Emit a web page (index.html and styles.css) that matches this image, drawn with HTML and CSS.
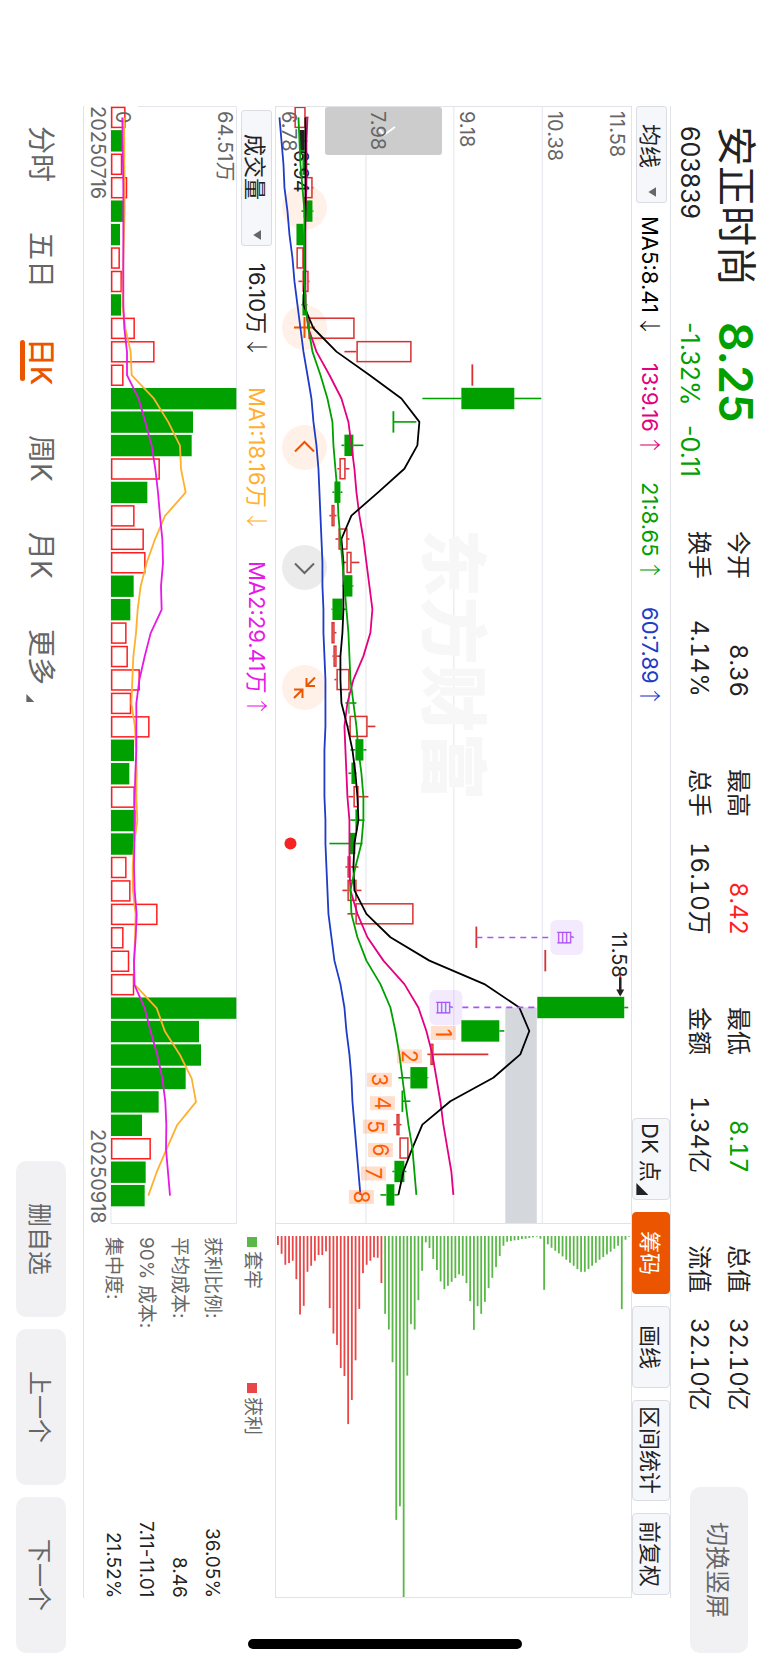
FILE: index.html
```html
<!DOCTYPE html>
<html lang="zh-CN">
<head>
  <meta charset="UTF-8">
  <meta name="viewport" content="width=device-width, initial-scale=1">
  <title>安正时尚 603839</title>
  <link rel="stylesheet" href="styles.css">
</head>
<body>

<div class="screen">

  <!-- Quote header -->
  <header class="quote">
    <div class="summary">
      <h1>安正时尚</h1>
      <strong class="price">8.25</strong>
      <span class="code">603839</span>
      <span class="change"><span>-1.32%</span><span>-0.11</span></span>
    </div>
    <dl class="stats">
      <div><dt>今开</dt><dd>8.36</dd></div>
      <div><dt>换手</dt><dd>4.14%</dd></div>
      <div><dt>最高</dt><dd class="up">8.42</dd></div>
      <div><dt>总手</dt><dd>16.10万</dd></div>
      <div><dt>最低</dt><dd class="down">8.17</dd></div>
      <div><dt>金额</dt><dd>1.34亿</dd></div>
      <div><dt>总值</dt><dd>32.10亿</dd></div>
      <div><dt>流值</dt><dd>32.10亿</dd></div>
    </dl>
    <button class="soft-btn switch-btn" type="button">切换竖屏</button>
  </header>

  <!-- Moving averages + tools -->
  <div class="toolbar">
    <button class="picker" type="button">均线<i class="caret"></i></button>
    <div class="legend">
      <span class="ma5">MA5:8.41<i class="arrow">↓</i></span>
      <span class="ma13">13:9.16<i class="arrow">↑</i></span>
      <span class="ma21">21:8.65<i class="arrow">↑</i></span>
      <span class="ma60">60:7.89<i class="arrow">↑</i></span>
    </div>
    <div class="tools">
      <button class="tool" type="button">DK 点<i class="corner"></i></button>
      <button class="tool active" type="button">筹码</button>
      <button class="tool" type="button">画线</button>
      <button class="tool tool-wide" type="button">区间统计</button>
      <button class="tool" type="button">前复权</button>
    </div>
  </div>

  <!-- Price chart + chip distribution -->
  <div class="charts">
    <div class="plot price-plot">
      <svg class="backdrop" viewBox="276 107 355 1117" aria-hidden="true">
        <path class="grid" d="M365.5 106V1224M453.5 106V1224M542 106V1224"/>
        <text class="watermark" transform="translate(428 529) rotate(90)">东方财富</text>
      </svg>
      <div class="zoom-tools">
        <button class="round" type="button" aria-label="缩小">
          <svg viewBox="0 0 45 45"><path d="M22.5 12V33"/></svg>
        </button>
        <button class="round" type="button" aria-label="放大">
          <svg viewBox="0 0 45 45"><path d="M22.5 12V33M12 22.5H33"/></svg>
        </button>
        <button class="round" type="button" aria-label="左移">
          <svg viewBox="0 0 45 45"><path d="M13 26.5L22.5 17L32 26.5"/></svg>
        </button>
        <button class="round off" type="button" aria-label="右移">
          <svg viewBox="0 0 45 45"><path d="M13 18.5L22.5 28L32 18.5"/></svg>
        </button>
        <button class="round" type="button" aria-label="收起">
          <svg viewBox="0 0 45 45"><path d="M33 12.5L24.5 21M24.5 13V21H33M12 33L20.5 24.5M12 24.5H20.5V33"/></svg>
        </button>
      </div>
      <button class="pull" type="button" aria-label="展开">
        <svg viewBox="0 0 117 48"><path d="M54 22L59 28L70 20"/></svg>
      </button>
      <svg id="priceChart" class="layer" viewBox="276 107 355 1117"></svg>
    </div>
    <div class="plot chip-plot">
      <svg id="chipChart" viewBox="276 1225 355 372"></svg>
    </div>
  </div>

  <!-- Volume + chip figures -->
  <div class="lower">
    <div class="volume">
      <div class="toolbar volume-bar">
        <button class="picker picker-wide" type="button">成交量<i class="caret"></i></button>
        <div class="legend">
          <span>16.10万<i class="arrow">↓</i></span>
          <span class="vma1">MA1:18.16万<i class="arrow">↓</i></span>
          <span class="vma2">MA2:29.41万<i class="arrow">↑</i></span>
        </div>
      </div>
      <div class="volume-plot">
        <svg id="volumeChart" viewBox="110 106 128 1118"></svg>
      </div>
      <div class="dates"><span>20250716</span><span>20250918</span></div>
    </div>
    <div class="chips">
      <div class="keys">
        <span class="key key-down">套牢</span>
        <span class="key key-up">获利</span>
      </div>
      <dl class="figures">
        <div><dt>获利比例:</dt><dd>36.05%</dd></div>
        <div><dt>平均成本:</dt><dd>8.46</dd></div>
        <div><dt>90% 成本:</dt><dd>7.11-11.01</dd></div>
        <div><dt>集中度:</dt><dd>21.52%</dd></div>
      </dl>
    </div>
  </div>

  <!-- Period tabs -->
  <footer class="bottom">
    <nav class="tabs">
      <a href="#">分时</a>
      <a href="#">五日</a>
      <a href="#" class="current">日K</a>
      <a href="#">周K</a>
      <a href="#">月K</a>
      <a href="#">更多<i class="more"></i></a>
    </nav>
    <div class="actions">
      <button class="soft-btn" type="button">删自选</button>
      <button class="soft-btn" type="button">上一个</button>
      <button class="soft-btn" type="button">下一个</button>
    </div>
  </footer>

  <div class="home-bar"></div>
</div>

<script src="chart.js"></script>
</body>
</html>
```
FILE: styles.css
```css
* {
  margin: 0;
  padding: 0;
  box-sizing: border-box;
}

html {
  height: 100%;
}

/* The phone is held sideways: lines run top to bottom, rows stack right to left */
body {
  height: 100%;
  writing-mode: vertical-rl;
  text-orientation: sideways;
  font-family: Inter, "Noto Sans CJK SC", sans-serif;
  background: #fff;
  color: #222;
}

button {
  writing-mode: vertical-rl;
  text-orientation: sideways;
  font-family: inherit;
  color: inherit;
  border: none;
  background: none;
  cursor: pointer;
}

svg {
  display: block;
  width: 100%;
  height: 100%;
}

i {
  font-style: normal;
}

.screen {
  position: relative;
  display: flex;
  flex-direction: column;
  width: 100vw;
  height: 100vh;
  overflow: hidden;
}

/* Quote header */
.quote {
  display: flex;
  align-items: center;
  width: 98px;
  padding: 126px 2px 12px 0;
}

.summary {
  display: grid;
  grid-template-columns: 196px 209px;
  grid-template-rows: 58px 34px;
  align-items: center;
}

h1 {
  font-size: 40px;
  font-weight: 400;
  line-height: 56px;
  white-space: nowrap;
}

.price {
  font-size: 46px;
  font-weight: 600;
  line-height: 56px;
}

.code,
.change {
  font-size: 25px;
  line-height: 32px;
}

.change {
  display: flex;
  gap: 20px;
}

.price,
.change,
.down {
  color: #00a000;
}

.up {
  color: #ff1e1e;
}

.stats {
  display: grid;
  grid-auto-flow: column;
  grid-template-rows: 39px 39px;
  grid-auto-columns: 166px;
  column-gap: 72px;
  font-size: 24px;
  line-height: 39px;
}

.stats div,
.figures div {
  display: flex;
  justify-content: space-between;
  white-space: nowrap;
}

.stats dd {
  font-variant-numeric: tabular-nums;
}

.soft-btn {
  width: 50px;
  height: 156px;
  border-radius: 10px;
  background: #f1f1f4;
  color: #666;
  font-size: 24px;
}

.switch-btn {
  width: 58px;
  height: 166px;
  margin-top: auto;
}

/* Tool rows */
.toolbar {
  display: flex;
  align-items: center;
  width: 39px;
  margin: 106px 0 67px;
  border-right: 1px solid #e2e3e8;
  font-size: 22px;
}

.picker {
  display: flex;
  align-items: center;
  justify-content: space-between;
  width: 31px;
  height: 97px;
  padding: 17px 0 5px 2px;
  border: 1px solid #dcdde3;
  border-radius: 3px;
  background: #f6f7fa;
  font-size: 22px;
}

.picker-wide {
  height: 136px;
  padding-top: 23px;
}

.caret {
  width: 8px;
  height: 10px;
  background: #666;
  clip-path: polygon(0 50%, 100% 0, 100% 100%);
}

.legend {
  display: flex;
  gap: 26px;
  margin-top: 13px;
  line-height: 36px;
  white-space: nowrap;
}

.arrow {
  margin-top: 2px;
  font-family: "Noto Sans CJK SC", sans-serif;
  font-weight: 300;
}

.ma5 { color: #000; }
.ma13 { color: #e4007f; }
.ma21 { color: #00a000; }
.ma60 { color: #1e3cc8; }
.vma1 { color: #ffb02e; }
.vma2 { color: #e619e6; }

.tools {
  display: flex;
  gap: 12px;
  height: max-content;
  margin: auto 0 3px;
}

.tool {
  position: relative;
  width: 38px;
  height: 82px;
  padding-left: 2px;
  border: 1px solid #dcdde3;
  border-radius: 4px;
  background: #f6f7fa;
  font-size: 22px;
  white-space: nowrap;
}

.tool:first-child {
  padding-bottom: 14px;
}

.tool-wide {
  height: 101px;
}

.tool.active {
  border-color: #eb5500;
  background: #eb5500;
  color: #fff;
}

.corner {
  position: absolute;
  left: 3px;
  bottom: 4px;
  width: 12px;
  height: 12px;
  background: #222;
  clip-path: polygon(0 0, 100% 100%, 0 100%);
}

/* Charts */
.charts {
  flex: 1;
  display: flex;
  margin: 106px 0 67px;
  border: 1px solid #e2e3e8;
}

.plot {
  position: relative;
  flex: 1117;
  min-height: 0;
}

.chip-plot {
  flex: 373;
  border-top: 1px solid #e2e3e8;
}

.backdrop,
.layer {
  position: absolute;
  top: 0;
  left: 0;
}

.layer {
  pointer-events: none;
}

.grid {
  fill: none;
  stroke: #e2e5ec;
}

svg text {
  writing-mode: horizontal-tb;
}

.watermark {
  font-size: 68px;
  font-weight: 900;
  fill: #f7f7f8;
}

.zoom-tools {
  position: absolute;
  top: 78px;
  left: 6px;
  display: flex;
  gap: 75px;
}

.round {
  width: 45px;
  height: 45px;
  border-radius: 50%;
  background: #fff0e8;
}

.round path,
.pull path {
  fill: none;
  stroke: #eb5500;
  stroke-width: 2;
}

.round.off {
  background: #ebebeb;
}

.round.off path {
  stroke: #666;
}

.pull {
  position: absolute;
  top: 0;
  left: 49px;
  width: 117px;
  height: 48px;
  border-radius: 3px;
  background: #ccc;
}

.pull path {
  stroke: #fff;
}

.axis {
  font-size: 20px;
  fill: #666;
}

.mark {
  font-size: 20px;
  fill: #222;
}

.count {
  font-size: 21px;
  fill: #ff5a00;
  text-anchor: middle;
}

.self {
  font-size: 17px;
  fill: #a855f7;
  text-anchor: middle;
}

.line {
  fill: none;
  stroke-width: 1.8;
  stroke-linejoin: round;
}

/* Volume and chip figures */
.lower {
  display: flex;
  width: 192px;
  margin: 106px 0 67px;
  border-left: 1px solid #e2e3e8;
}

.volume {
  flex: 1118;
  min-height: 0;
}

.volume-bar {
  width: 37px;
  margin: 0;
  padding-top: 4px;
  border: none;
}

.volume-bar .legend {
  gap: 29px;
  margin-top: 17px;
  padding-left: 3px;
}

.volume-plot {
  width: 128px;
}

.dates {
  display: flex;
  justify-content: space-between;
  width: 26px;
  color: #666;
  font-size: 20px;
  line-height: 24px;
}

.chips {
  flex: 374;
  min-height: 0;
  color: #666;
}

.keys {
  display: flex;
  gap: 94px;
  width: 46px;
  padding-top: 13px;
  font-size: 19px;
  line-height: 38px;
}

.key {
  display: flex;
  align-items: center;
  gap: 4px;
}

.key::before {
  content: "";
  width: 10px;
  height: 10px;
  background: #5ab946;
}

.key-up::before {
  background: #eb4646;
}

.figures {
  padding-top: 13px;
  font-size: 19px;
  line-height: 33px;
}

.figures dd {
  color: #222;
}

/* Period tabs */
.bottom {
  display: flex;
  align-items: center;
  width: 83px;
  padding: 126px 0 12px;
}

.tabs {
  display: flex;
  gap: 50px;
  color: #666;
  font-size: 28px;
}

.tabs a {
  position: relative;
  color: inherit;
  line-height: 42px;
  text-decoration: none;
  white-space: nowrap;
}

.tabs .current {
  color: #eb5500;
  font-weight: 500;
}

.tabs .current::after {
  content: "";
  position: absolute;
  left: 0;
  top: 2px;
  bottom: 4px;
  width: 5px;
  border-radius: 3px;
  background: #eb5500;
}

.more {
  position: absolute;
  left: 6px;
  bottom: -17px;
  width: 8px;
  height: 8px;
  background: #666;
  clip-path: polygon(0 0, 100% 100%, 0 100%);
}

.actions {
  display: flex;
  gap: 12px;
  margin-top: auto;
}

.home-bar {
  position: absolute;
  bottom: 16px;
  left: 50%;
  width: 274px;
  height: 10px;
  margin-left: -137px;
  border-radius: 5px;
  background: #000;
}
```
FILE: chart.js
```js
const RED = '#d93030';
const GREEN = '#00a000';
const FIRST = 117.4;  // centre of the first day
const STEP = 23.44;   // distance between days

const dayY = i => FIRST + i * STEP;

// low, body start, body end, high, colour
const candles = [
  [291, 294, 305, 308, 'r'], [300, 300, 304, 307, 'g'], [302, 302, 305, 309, 'g'],
  [304, 305, 312, 313, 'r'], [301, 305, 312, 313, 'g'], [296, 296, 303, 303, 'g'],
  [296, 296, 303, 303, 'r'], [298, 302, 308, 309, 'r'], [301, 302, 306, 307, 'g'],
  [308, 308, 354, 354, 'r'], [344, 356, 411, 411, 'r'], [472, 472, 472, 472, 'r'],
  [422, 461, 514, 541, 'g'], [393, 393, 393, 416, 'g'], [341, 344, 353, 363, 'g'],
  [337, 339, 345, 349, 'r'], [332, 334, 340, 342, 'g'], [329, 331, 334, 336, 'r'],
  [335, 338, 347, 349, 'r'], [342, 346, 351, 359, 'r'], [342, 344, 352, 353, 'g'],
  [331, 332, 342, 346, 'g'], [331, 331, 334, 336, 'r'], [332, 333, 336, 340, 'r'],
  [334, 336, 349, 349, 'r'], [345, 348, 349, 356, 'g'], [348, 349, 367, 375, 'r'],
  [350, 355, 363, 366, 'g'], [348, 351, 355, 356, 'g'], [348, 353, 358, 368, 'r'],
  [350, 355, 357, 364, 'g'], [329, 349, 355, 362, 'g'], [345, 347, 350, 358, 'r'],
  [342, 347, 356, 361, 'r'], [347, 355, 413, 413, 'r'], [476, 476, 476, 476, 'r'],
  [545, 545, 545, 545, 'r'], [620, 620, 620, 620, 'r'], [537, 537, 624, 628, 'g'],
  [461, 461, 499, 504, 'g'], [427, 430, 433, 488, 'r'], [398, 410, 427, 428, 'g'],
  [402, 402, 402, 410, 'g'], [393, 396, 399, 401, 'r'], [399, 399, 408, 408, 'r'],
  [392, 394, 404, 406, 'g'], [380, 386, 394, 398, 'g']
];

const ma5 = [305, 305, 305, 305, 305, 304, 304, 304, 303, 313, 336, 369, 401, 419, 417, 404,
  378, 351, 341, 343, 343, 343, 342, 340, 340, 341, 347, 352, 355, 357, 358, 354, 353, 354,
  366, 390, 429, 484, 519, 529, 520, 493, 450, 422, 412, 403, 398];
const ma13 = [307, 306, 306, 306, 305, 305, 305, 305, 305, 308, 316, 329, 341, 348, 351, 354,
  356, 359, 363, 366, 369, 372, 370, 363, 353, 347, 344, 345, 346, 347, 349, 349, 349, 350,
  357, 367, 383, 404, 418, 426, 432, 436, 440, 443, 447, 451, 453];
const ma21 = [298, 299, 300, 302, 304, 304, 304, 304, 305, 308, 312, 320, 327, 332, 333, 335,
  337, 338, 340, 342, 344, 346, 348, 349, 350, 353, 356, 358, 361, 363, 363, 361, 355, 350,
  351, 357, 366, 380, 390, 395, 399, 402, 405, 408, 412, 414, 416];
const ma60 = [279, 281, 283, 284, 287, 289, 292, 294, 297, 300, 303, 307, 311, 313, 316, 318,
  319, 320, 321, 322, 322, 323, 323, 324, 325, 325, 325, 324, 324, 324, 325, 325, 326, 327,
  328, 331, 334, 340, 344, 346, 349, 351, 352, 354, 356, 358, 360];

// volume bars and their averages, 376 = 64.51万
const volumes = [43, 33, 33, 48, 36, 27, 26, 32, 30, 71, 130, 37, 376, 246, 242, 146, 109, 70,
  98, 103, 68, 58, 46, 50, 86, 60, 115, 69, 55, 71, 74, 68, 46, 58, 139, 37, 54, 69, 376, 264,
  270, 224, 143, 93, 119, 104, 101];
const falling = [1, 4, 5, 8, 12, 13, 14, 16, 20, 21, 27, 28, 30, 31, 38, 39, 40, 41, 42, 43, 45, 46];
const vma1 = [39, 40, 40, 41, 41, 39, 37, 35, 34, 43, 59, 62, 129, 172, 207, 210, 224, 162, 132,
  107, 89, 80, 75, 67, 64, 61, 72, 75, 77, 76, 79, 69, 65, 66, 74, 72, 69, 71, 137, 162, 207,
  242, 255, 198, 167, 137, 112];
const vma2 = [34, 35, 36, 37, 37, 37, 37, 37, 37, 40, 48, 48, 83, 103, 122, 133, 141, 147, 154,
  156, 150, 152, 119, 101, 85, 76, 76, 76, 73, 71, 70, 70, 69, 71, 77, 74, 69, 70, 101, 119,
  139, 154, 163, 166, 165, 171, 177];

// chip distribution, cheapest price first
const chips = [27, 53, 86, 81, 74, 129, 235, 209, 107, 89, 74, 57, 57, 46, 216, 292, 326, 395,
  419, 563, 491, 372, 218, 111, 86, 74, 64, 65, 141,
  233, 280, 378, 850, 809, 1082, 418, 264, 280, 192, 104, 19, 36, 69, 102, 136, 159, 149, 137,
  126, 115, 119, 141, 195, 281, 210, 233, 197, 156, 125, 93, 60, 29, 17, 15, 13, 12, 9, 8, 6,
  4, 2, 8, 161, 25, 35, 44, 52, 61, 71, 80, 89, 99, 107, 107, 99, 89, 80, 71, 63, 55, 47, 38,
  29, 219, 11, 2];
const PROFIT = 29;

const text = (cls, x, y, str) =>
  `<text class="${cls}" transform="translate(${x} ${y}) rotate(90)">${str}</text>`;

const line = (color, xs) => {
  const pts = xs.map((x, i) => `${x},${dayY(i).toFixed(1)}`).join(' ');
  return `<polyline class="line" stroke="${color}" points="${pts}"/>`;
};

const box = (x1, x2, y, hollow, color) => hollow
  ? `<rect x="${x1 + 0.7}" y="${y - 10}" width="${x2 - x1 - 1.2}" height="20" fill="none" stroke="${color}" stroke-width="1.5"/>`
  : `<rect x="${x1}" y="${y - 10.7}" width="${x2 - x1}" height="21.4" fill="${color}"/>`;

function drawPrice() {
  let out = '';

  // resistance band
  out += '<rect x="505" y="1008" width="31.5" height="216" fill="#d4d7dc"/>';
  out += text('axis', 282, 111, '6.78') + text('axis', 371, 111, '7.98')
    + text('axis', 460, 111, '9.18') + text('axis', 548, 111, '10.38')
    + text('axis', 610, 111, '11.58');

  candles.forEach(([low, a, b, high, c], i) => {
    const y = dayY(i);
    const color = c === 'r' ? RED : GREEN;
    if (a === b) {
      out += `<path d="M${a} ${y - 10.7}v21.4" stroke="${color}" stroke-width="1.8"/>`;
    } else {
      out += box(a, b, y, c === 'r', color);
    }
    if (low < a) out += `<path d="M${low} ${y}H${a}" stroke="${color}" stroke-width="1.6"/>`;
    if (high > b) out += `<path d="M${b} ${y}H${high}" stroke="${color}" stroke-width="1.6"/>`;
  });

  // lowest and highest price
  out += text('mark', 294, 150, '6.94');
  out += '<path d="M299 130h5v20h-5z" fill="#222"/>';
  out += text('mark', 612, 932, '11.58');
  out += '<path d="M620 978V992" stroke="#222" stroke-width="2.5"/><path d="M616 990h8l-4 7z" fill="#222"/>';

  out += line('#1e3cc8', ma60) + line('#e4007f', ma13) + line('#000', ma5) + line(GREEN, ma21);

  // nine-turn counts
  [443, 409, 379, 382, 375, 380, 373, 361].forEach((x, i) => {
    const y = dayY(39 + i) + 2;
    out += `<rect x="${x - 12.5}" y="${y - 7}" width="25" height="14" fill="#ff5a00" fill-opacity=".2"/>`;
    out += text('count', x - 7.5, y, i + 1);
  });

  // watch-list marks
  [[550, 938, 476, 550], [429, 1008, 462, 537]].forEach(([x, y, from, to]) => {
    out += `<path d="M${from} ${y}H${to}" stroke="#a855f7" stroke-width="1.6" stroke-dasharray="6 5"/>`;
    out += `<rect x="${x}" y="${y - 17.5}" width="33" height="35" rx="6" fill="#a855f7" fill-opacity=".12"/>`;
    out += text('self', x + 9, y, '自');
  });

  out += '<circle cx="290" cy="844" r="6" fill="#f52323"/>';
  document.getElementById('priceChart').innerHTML = out;
}

function drawChips() {
  let out = '';
  chips.forEach((v, i) => {
    const x = 277 + i * 3.69;
    out += `<rect x="${x.toFixed(1)}" y="1237" width="1.8" height="${(v / 3).toFixed(1)}" fill="${i < PROFIT ? '#eb4646' : '#5ab946'}"/>`;
  });
  document.getElementById('chipChart').innerHTML = out;
}

function drawVolume() {
  let out = '<path class="grid" d="M138 106.5H236.5V1223.5H111V106"/>';
  volumes.forEach((v, i) => {
    out += box(111, 111 + v / 3, dayY(i), !falling.includes(i), falling.includes(i) ? GREEN : '#ff1e1e');
  });
  out += text('axis', 116, 111, '0') + text('axis', 218, 111, '64.51万');
  out += line('#ffb02e', vma1.map(v => 111 + v / 3));
  out += line('#e619e6', vma2.map(v => 111 + v / 3));
  document.getElementById('volumeChart').innerHTML = out;
}

drawPrice();
drawChips();
drawVolume();
```
